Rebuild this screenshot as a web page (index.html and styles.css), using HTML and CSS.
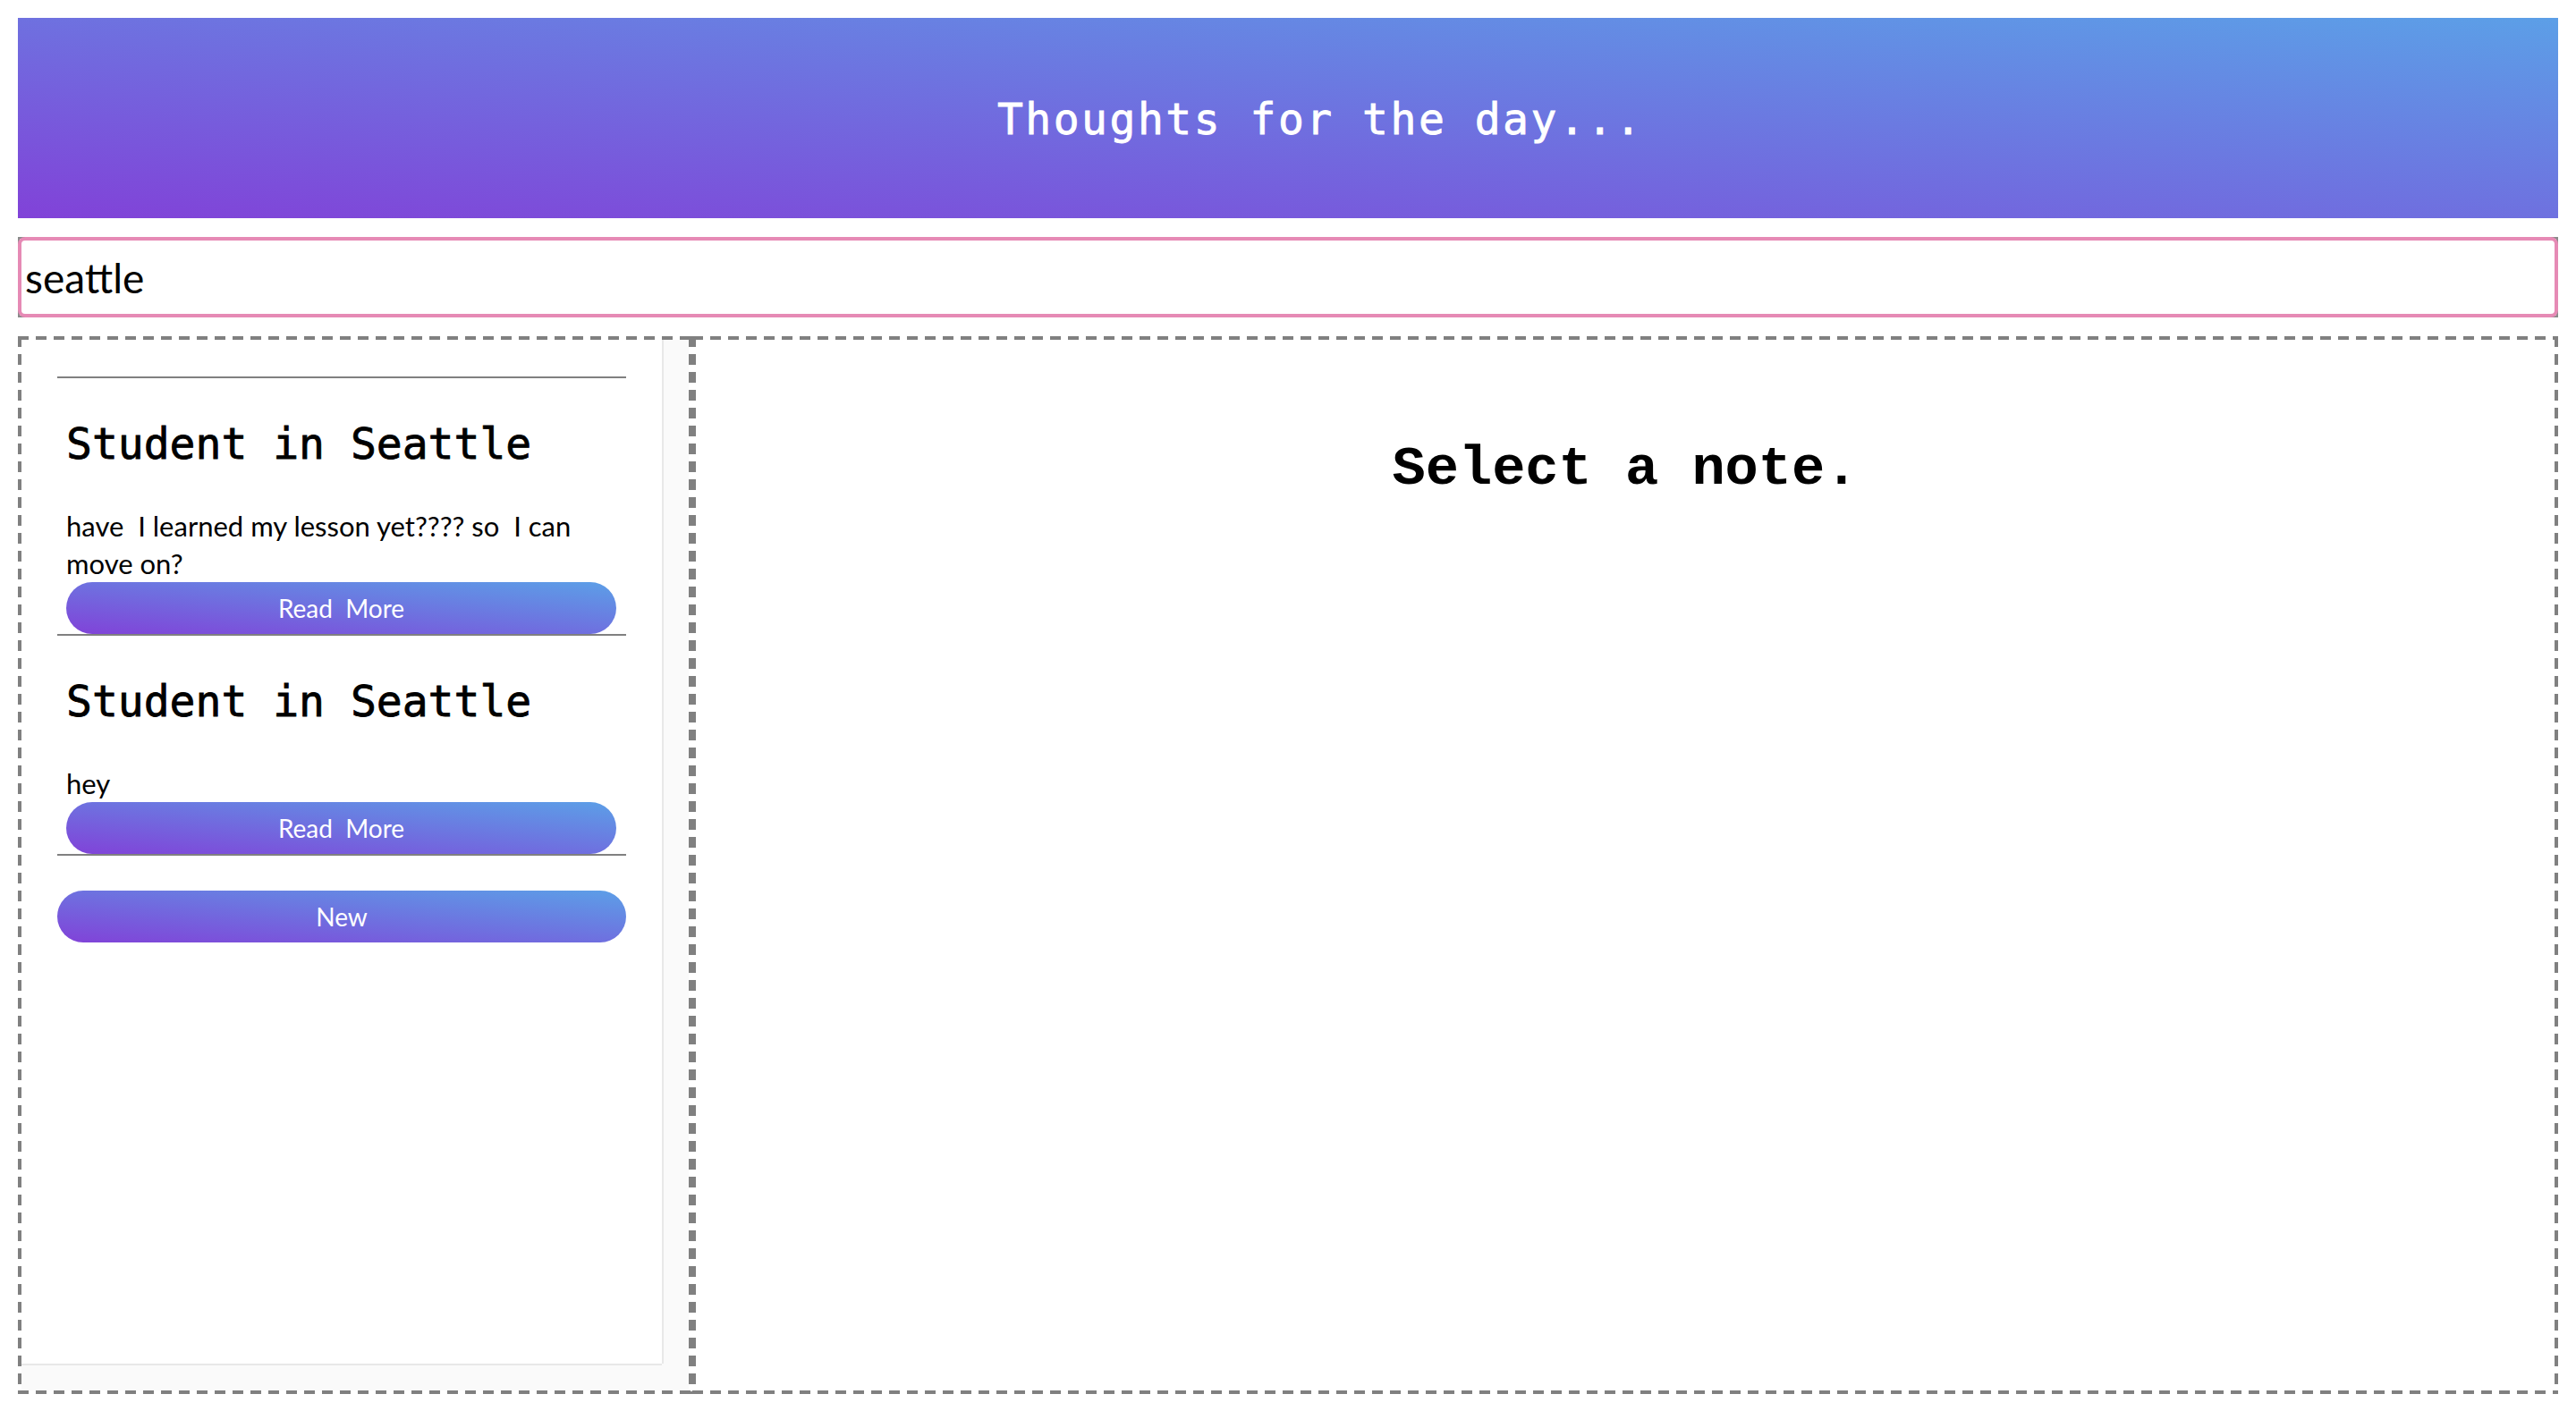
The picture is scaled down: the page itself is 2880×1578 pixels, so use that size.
FILE: index.html
```html
<!DOCTYPE html>
<html lang="en">
<head>
<meta charset="utf-8">
<title>Thoughts for the day...</title>
<link rel="stylesheet" href="styles.css">
</head>
<body>
  <header class="banner">
    <h1 class="banner-title">Thoughts for the day...</h1>
  </header>
  <div class="search">
    <input class="search-input" type="text" value="seattle">
  </div>
  <main class="workspace">
    <aside class="sidebar dash-box">
      <div class="scroller">
        <div class="scroll-content">
          <ul class="note-list">
            <li class="note-card">
              <h2 class="note-title">Student in Seattle</h2>
              <p class="note-body">have&nbsp; I learned my lesson yet???? so&nbsp; I can move on?</p>
              <button class="pill-btn" type="button">Read&nbsp; More</button>
            </li>
            <li class="note-card">
              <h2 class="note-title">Student in Seattle</h2>
              <p class="note-body">hey</p>
              <button class="pill-btn" type="button">Read&nbsp; More</button>
            </li>
          </ul>
          <button class="pill-btn new-btn" type="button">New</button>
        </div>
        <div class="track track-v"></div>
        <div class="track track-h"></div>
        <div class="track track-corner"></div>
      </div>
    </aside>
    <section class="detail dash-box">
      <h1 class="detail-title">Select a note.</h1>
    </section>
  </main>
</body>
</html>
```

FILE: styles.css
```css
* {
  box-sizing: border-box;
}

html, body {
  height: 100%;
}

body {
  margin: 0;
  padding: 20px 20px 19px;
  background: #ffffff;
  font-family: Lato, "Open Sans", sans-serif;
  color: #000000;
  display: flex;
  flex-direction: column;
}

.banner {
  height: 224px;
  flex: none;
  background: linear-gradient(to top right, #8142d8, #5c9fe7);
  display: flex;
  align-items: center;
  justify-content: center;
  padding-left: 72px;
}

.banner-title {
  margin: 0;
  font-family: "DejaVu Sans Mono", monospace;
  font-weight: normal;
  font-size: 48px;
  letter-spacing: 2.5px;
  color: #ffffff;
  line-height: 56px;
  padding-top: 2px;
  -webkit-text-stroke: 0.8px #ffffff;
}

.search {
  flex: none;
  margin-top: 21px;
  height: 90px;
  border: 2px solid #8a8a8a;
}

.search-input {
  display: block;
  margin: -2px;
  width: calc(100% + 4px);
  height: calc(100% + 4px);
  border: 4px solid #e68ab5;
  border-radius: 8px;
  padding: 0 0 0 4px;
  font-family: Lato, "Open Sans", sans-serif;
  font-size: 46px;
  color: #000000;
  background: #ffffff;
  outline: none;
}

.workspace {
  flex: 1;
  margin-top: 21px;
  display: flex;
  min-height: 0;
}

.dash-box {
  border: 4px solid transparent;
  background:
    repeating-linear-gradient(to right, #808080 0 12px, transparent 12px 20px) left top / 100% 4px no-repeat border-box,
    repeating-linear-gradient(to right, #808080 0 12px, transparent 12px 20px) left bottom / 100% 4px no-repeat border-box,
    repeating-linear-gradient(to bottom, #808080 0 12px, transparent 12px 20px) left top / 4px 100% no-repeat border-box,
    repeating-linear-gradient(to bottom, #808080 0 12px, transparent 12px 20px) right top / 4px 100% no-repeat border-box,
    #ffffff;
}

.sidebar {
  width: 754px;
  flex: none;
}

.scroller {
  height: 100%;
  display: grid;
  grid-template-columns: 1fr 30px;
  grid-template-rows: 1fr 30px;
}

.scroll-content {
  padding: 41px 40px 0;
  overflow: hidden;
}

.track {
  background: #fafafa;
}

.track-v {
  border-left: 2px solid #e8e8e8;
}

.track-h {
  border-top: 2px solid #e8e8e8;
}

.note-list {
  list-style: none;
  margin: 0;
  padding: 0;
  border-top: 2px solid #808080;
}

.note-card {
  padding: 45px 11px 0 10px;
  border-bottom: 2px solid #808080;
}

.note-title {
  margin: 0 0 43px;
  font-family: "DejaVu Sans Mono", monospace;
  font-weight: normal;
  font-size: 48px;
  line-height: 56px;
  -webkit-text-stroke: 0.8px #000000;
}

.note-body {
  margin: 0;
  font-size: 31px;
  line-height: 42px;
}

.pill-btn {
  display: block;
  width: 100%;
  height: 58px;
  border: none;
  border-radius: 29px;
  background: linear-gradient(to top right, #8142d8, #5c9fe7);
  color: #ffffff;
  font-family: Lato, "Open Sans", sans-serif;
  font-size: 28px;
  padding: 0;
  cursor: pointer;
}

.new-btn {
  margin-top: 39px;
}

.detail {
  flex: 1;
  text-align: center;
  padding-top: 110px;
}

.detail-title {
  margin: 0;
  font-family: "Courier New", "Nimbus Mono PS", "Nimbus Mono L", "FreeMono", "Liberation Mono", monospace;
  font-weight: bold;
  font-size: 62px;
  line-height: 70px;
}
```
